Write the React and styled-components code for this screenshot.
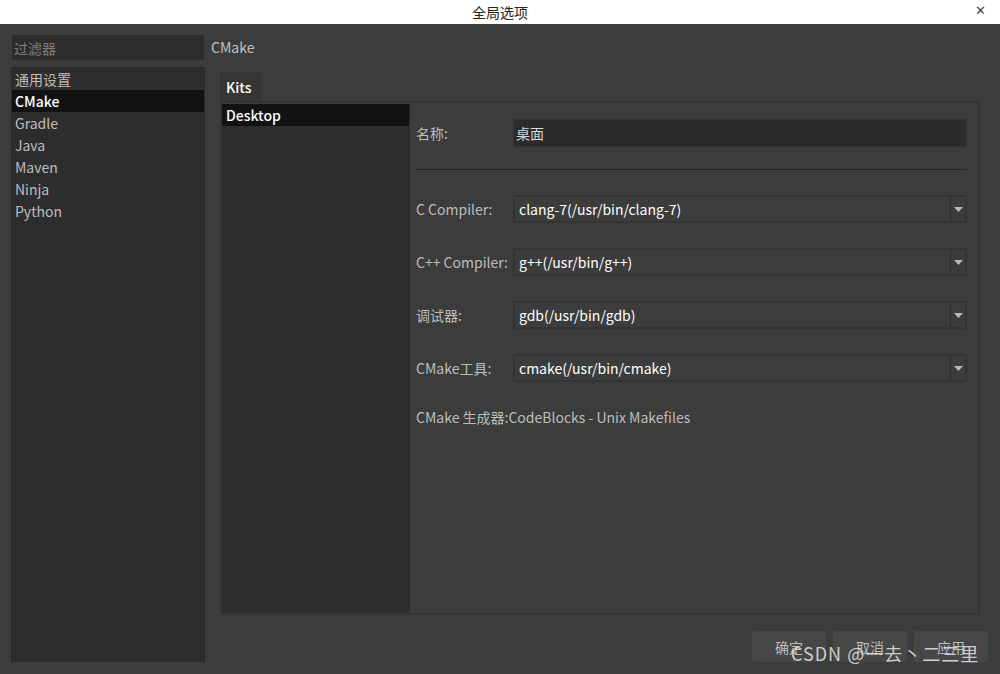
import styled, { createGlobalStyle } from "styled-components";

const Global = createGlobalStyle`
  html, body { margin: 0; padding: 0; }
  body {
    width: 1000px;
    height: 674px;
    overflow: hidden;
    font-family: "Noto Sans CJK SC", "Noto Sans", sans-serif;
    font-size: 14px;
    background: #3c3c3c;
  }
`

const Window = styled.div`
  width: 1000px;
  height: 674px;
  display: flex;
  flex-direction: column;
  position: relative;
  background: #3c3c3c;
`

const TitleBar = styled.div`
  height: 24px;
  background: #fff;
  display: flex;
  align-items: center;
  justify-content: center;
  position: relative;
  color: #222;
  font-size: 14px;
  .close{
    position: absolute;
    right: 14px;
    top: 3px;
    font-size: 13px;
    color: #444;
    font-family: "DejaVu Sans", sans-serif;
  }
`

const Body = styled.div`
  flex: 1;
  display: flex;
  padding: 11px 12px 0 11px;
  gap: 6px;
`

const Side = styled.div`
  width: 194px;
  display: flex;
  flex-direction: column;
  gap: 7px;
  padding-bottom: 12px;
`

const Filter = styled.div`
  height: 25px;
  margin: 0 1px;
  background: #2d2d2d;
  color: #7c7c7c;
  padding-left: 2px;
  display: flex;
  align-items: center;
`

const List = styled.div`
  flex: 1;
  background: #2d2d2d;
  border: 1px solid #2a2a2a;
`

const Item = styled.div`
  height: 22px;
  line-height: 22px;
  padding-left: 3px;
  color: ${p => p.$active ? "#ffffff" : "#bdbdbd"};
  background: ${p => p.$active ? "#121212" : "transparent"};
  font-weight: ${p => p.$active ? 500 : 400};
`

const Main = styled.div`
  flex: 1;
  display: flex;
  flex-direction: column;
`

const Heading = styled.div`
  color: #c2c2c2;
  height: 24px;
  line-height: 24px;
  margin-bottom: 13px;
`

const TabBar = styled.div`
  display: flex;
  padding-left: 9px;
`

const Tab = styled.div`
  width: 42px;
  height: 29px;
  background: #353535;
  color: #fff;
  padding-left: 6px;
  line-height: 31px;
  box-sizing: border-box;
  font-weight: 500;
`

const Pane = styled.div`
  margin-left: 9px;
  width: 760px;
  height: 514px;
  box-sizing: border-box;
  border: 2px solid #333;
  display: flex;
`

const KitList = styled.div`
  width: 187px;
  background: #2d2d2d;
  margin-top: 1px;
  border-right: 1px solid #2a2a2a;
`

const Kit = styled.div`
  height: 22px;
  line-height: 22px;
  padding-left: 4px;
  background: #121212;
  color: #fff;
  font-weight: 500;
`

const Details = styled.div`
  flex: 1;
  padding: 16px 11px 0 6px;
  display: flex;
  flex-direction: column;
`

const Row = styled.div`
  display: flex;
  align-items: center;
  height: 28px;
  margin-bottom: ${p => p.$mb || 0}px;
`

const Label = styled.div`
  width: 97px;
  color: #bcbcbc;
`

const Field = styled.div`
  flex: 1;
  height: 26px;
  background: #2b2b2b;
  color: #d8d8d8;
  border: 1px solid #333;
  display: flex;
  align-items: center;
  padding-left: 2px;
`

const Combo = styled.div`
  flex: 1;
  height: 28px;
  box-sizing: border-box;
  border: 2px solid #343434;
  border-radius: 2px;
  display: flex;
  align-items: center;
  color: #fff;
  .value{
    flex: 1;
    padding-left: 4px;
  }
  .arrow{
    width: 14px;
    height: 100%;
    border-left: 1px solid #2c2c2c;
    display: flex;
    align-items: center;
    justify-content: center;
  }
`

const Divider = styled.div`
  height: 1px;
  background: #262626;
  margin: 0 0 25px 0;
`

const Note = styled.div`
  color: #bcbcbc;
`

const Footer = styled.div`
  display: flex;
  justify-content: flex-end;
  gap: 7px;
  padding: 0 0 12px 0;
`

const Button = styled.div`
  width: 74px;
  height: 31px;
  background: #474747;
  border-radius: 3px;
  color: #bdbdbd;
  display: flex;
  align-items: center;
  justify-content: center;
`

const Watermark = styled.div`
  position: absolute;
  left: 791px;
  top: 640px;
  font-size: 18px;
  color: rgba(230,230,230,0.85);
  font-family: "Noto Sans CJK SC", sans-serif;
  letter-spacing: 1px;
`

const Arrow = () => (
  <svg width="9" height="5" viewBox="0 0 9 5">
    <path d="M0 0 H9 L4.5 5 Z" fill="#b8b8b8" />
  </svg>
)

const combos = [
  ["C Compiler:", "clang-7(/usr/bin/clang-7)"],
  ["C++ Compiler:", "g++(/usr/bin/g++)"],
  ["调试器:", "gdb(/usr/bin/gdb)"],
  ["CMake工具:", "cmake(/usr/bin/cmake)"],
]

export default function App() {
  const items = ["通用设置", "CMake", "Gradle", "Java", "Maven", "Ninja", "Python"]
  return (
    <Window>
      <Global />
      <TitleBar>
        全局选项
        <span className="close">✕</span>
      </TitleBar>
      <Body>
        <Side>
          <Filter>过滤器</Filter>
          <List>
            {items.map(i => <Item key={i} $active={i === "CMake"}>{i}</Item>)}
          </List>
        </Side>
        <Main>
          <Heading>CMake</Heading>
          <TabBar><Tab>Kits</Tab></TabBar>
          <Pane>
            <KitList>
              <Kit>Desktop</Kit>
            </KitList>
            <Details>
              <Row $mb={22}>
                <Label>名称:</Label>
                <Field>桌面</Field>
              </Row>
              <Divider />
              {combos.map(([l, v]) => (
                <Row key={l} $mb={25}>
                  <Label>{l}</Label>
                  <Combo>
                    <span className="value">{v}</span>
                    <span className="arrow"><Arrow /></span>
                  </Combo>
                </Row>
              ))}
              <Note>CMake 生成器:CodeBlocks - Unix Makefiles</Note>
            </Details>
          </Pane>
          <div style={{ flex: 1 }} />
          <Footer>
            <Button>确定</Button>
            <Button>取消</Button>
            <Button>应用</Button>
          </Footer>
        </Main>
      </Body>
      <Watermark>CSDN @一去丶二三里</Watermark>
    </Window>
  )
}
